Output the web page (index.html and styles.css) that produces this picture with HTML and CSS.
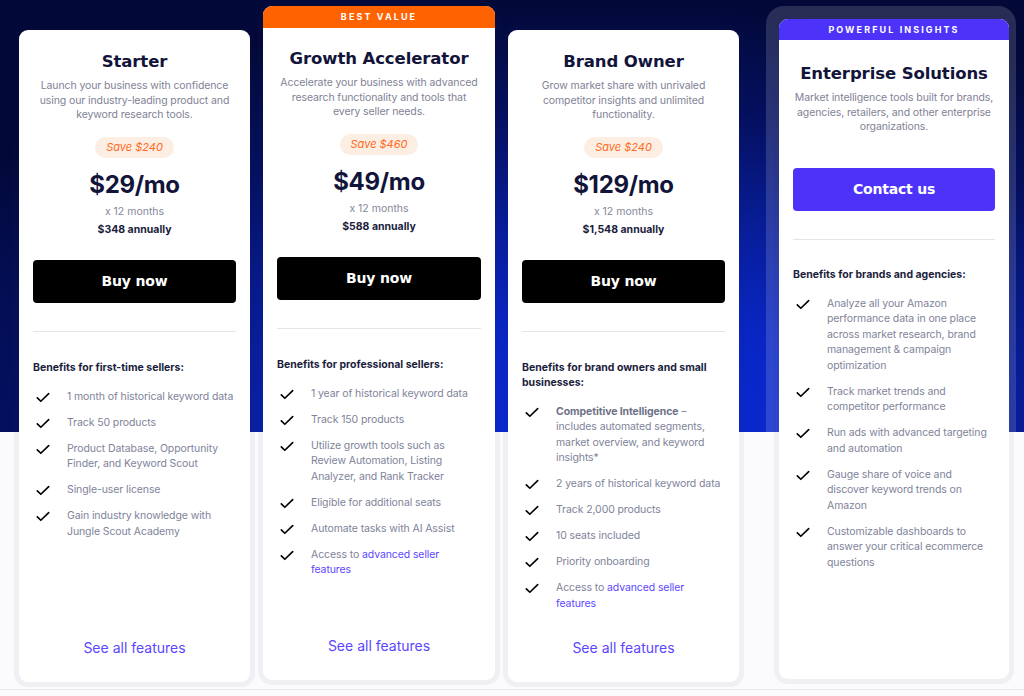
FILE: index.html
```html
<!DOCTYPE html>
<html lang="en">
<head>
<meta charset="utf-8">
<title>Pricing</title>
<link rel="stylesheet" href="styles.css">
</head>
<body>
<div class="page">
  <section class="plans">

    <article class="card card-starter">
      <div class="card-body">
        <h2 class="plan-title">Starter</h2>
        <p class="plan-desc">Launch your business with confidence<br>using our industry-leading product and<br>keyword research tools.</p>
        <span class="save">Save $240</span>
        <div class="price">$29/mo</div>
        <div class="months">x 12 months</div>
        <div class="annual">$348 annually</div>
        <a class="btn btn-black">Buy now</a>
        <hr class="divider">
        <h3 class="benefits-title">Benefits for first-time sellers:</h3>
        <ul class="benefits">
          <li><svg class="check" viewBox="0 0 16 12"><polyline points="1.5,6.5 5.5,10.3 14.5,1.5"/></svg><span>1 month of historical keyword data</span></li>
          <li><svg class="check" viewBox="0 0 16 12"><polyline points="1.5,6.5 5.5,10.3 14.5,1.5"/></svg><span>Track 50 products</span></li>
          <li><svg class="check" viewBox="0 0 16 12"><polyline points="1.5,6.5 5.5,10.3 14.5,1.5"/></svg><span>Product Database, Opportunity Finder, and Keyword Scout</span></li>
          <li><svg class="check" viewBox="0 0 16 12"><polyline points="1.5,6.5 5.5,10.3 14.5,1.5"/></svg><span>Single-user license</span></li>
          <li><svg class="check" viewBox="0 0 16 12"><polyline points="1.5,6.5 5.5,10.3 14.5,1.5"/></svg><span>Gain industry knowledge with Jungle Scout Academy</span></li>
        </ul>
        <a class="see-all">See all features</a>
      </div>
    </article>

    <article class="card card-growth">
      <div class="ribbon ribbon-orange">BEST VALUE</div>
      <div class="card-body">
        <h2 class="plan-title">Growth Accelerator</h2>
        <p class="plan-desc">Accelerate your business with advanced<br>research functionality and tools that<br>every seller needs.</p>
        <span class="save">Save $460</span>
        <div class="price">$49/mo</div>
        <div class="months">x 12 months</div>
        <div class="annual">$588 annually</div>
        <a class="btn btn-black">Buy now</a>
        <hr class="divider">
        <h3 class="benefits-title">Benefits for professional sellers:</h3>
        <ul class="benefits">
          <li><svg class="check" viewBox="0 0 16 12"><polyline points="1.5,6.5 5.5,10.3 14.5,1.5"/></svg><span>1 year of historical keyword data</span></li>
          <li><svg class="check" viewBox="0 0 16 12"><polyline points="1.5,6.5 5.5,10.3 14.5,1.5"/></svg><span>Track 150 products</span></li>
          <li><svg class="check" viewBox="0 0 16 12"><polyline points="1.5,6.5 5.5,10.3 14.5,1.5"/></svg><span>Utilize growth tools such as Review Automation, Listing Analyzer, and Rank Tracker</span></li>
          <li><svg class="check" viewBox="0 0 16 12"><polyline points="1.5,6.5 5.5,10.3 14.5,1.5"/></svg><span>Eligible for additional seats</span></li>
          <li><svg class="check" viewBox="0 0 16 12"><polyline points="1.5,6.5 5.5,10.3 14.5,1.5"/></svg><span>Automate tasks with AI Assist</span></li>
          <li><svg class="check" viewBox="0 0 16 12"><polyline points="1.5,6.5 5.5,10.3 14.5,1.5"/></svg><span>Access to <a class="inline-link">advanced seller features</a></span></li>
        </ul>
        <a class="see-all">See all features</a>
      </div>
    </article>

    <article class="card card-brand">
      <div class="card-body">
        <h2 class="plan-title">Brand Owner</h2>
        <p class="plan-desc">Grow market share with unrivaled<br>competitor insights and unlimited<br>functionality.</p>
        <span class="save">Save $240</span>
        <div class="price">$129/mo</div>
        <div class="months">x 12 months</div>
        <div class="annual">$1,548 annually</div>
        <a class="btn btn-black">Buy now</a>
        <hr class="divider">
        <h3 class="benefits-title">Benefits for brand owners and small businesses:</h3>
        <ul class="benefits">
          <li><svg class="check" viewBox="0 0 16 12"><polyline points="1.5,6.5 5.5,10.3 14.5,1.5"/></svg><span><b>Competitive Intelligence</b> – includes automated segments, market overview, and keyword insights*</span></li>
          <li><svg class="check" viewBox="0 0 16 12"><polyline points="1.5,6.5 5.5,10.3 14.5,1.5"/></svg><span>2 years of historical keyword data</span></li>
          <li><svg class="check" viewBox="0 0 16 12"><polyline points="1.5,6.5 5.5,10.3 14.5,1.5"/></svg><span>Track 2,000 products</span></li>
          <li><svg class="check" viewBox="0 0 16 12"><polyline points="1.5,6.5 5.5,10.3 14.5,1.5"/></svg><span>10 seats included</span></li>
          <li><svg class="check" viewBox="0 0 16 12"><polyline points="1.5,6.5 5.5,10.3 14.5,1.5"/></svg><span>Priority onboarding</span></li>
          <li><svg class="check" viewBox="0 0 16 12"><polyline points="1.5,6.5 5.5,10.3 14.5,1.5"/></svg><span>Access to <a class="inline-link">advanced seller features</a></span></li>
        </ul>
        <a class="see-all">See all features</a>
      </div>
    </article>

    <div class="enterprise-wrap">
      <article class="card card-enterprise">
        <div class="ribbon ribbon-purple">POWERFUL INSIGHTS</div>
        <div class="card-body">
          <h2 class="plan-title">Enterprise Solutions</h2>
          <p class="plan-desc">Market intelligence tools built for brands,<br>agencies, retailers, and other enterprise<br>organizations.</p>
          <a class="btn btn-purple">Contact us</a>
          <hr class="divider">
          <h3 class="benefits-title">Benefits for brands and agencies:</h3>
          <ul class="benefits">
            <li><svg class="check" viewBox="0 0 16 12"><polyline points="1.5,6.5 5.5,10.3 14.5,1.5"/></svg><span>Analyze all your Amazon performance data in one place across market research, brand management &amp; campaign optimization</span></li>
            <li><svg class="check" viewBox="0 0 16 12"><polyline points="1.5,6.5 5.5,10.3 14.5,1.5"/></svg><span>Track market trends and competitor performance</span></li>
            <li><svg class="check" viewBox="0 0 16 12"><polyline points="1.5,6.5 5.5,10.3 14.5,1.5"/></svg><span>Run ads with advanced targeting and automation</span></li>
            <li><svg class="check" viewBox="0 0 16 12"><polyline points="1.5,6.5 5.5,10.3 14.5,1.5"/></svg><span>Gauge share of voice and discover keyword trends on Amazon</span></li>
            <li><svg class="check" viewBox="0 0 16 12"><polyline points="1.5,6.5 5.5,10.3 14.5,1.5"/></svg><span>Customizable dashboards to answer your critical ecommerce questions</span></li>
          </ul>
        </div>
      </article>
    </div>

  </section>
</div>
</body>
</html>
```

FILE: styles.css
```css
* { box-sizing: border-box; }

body {
  margin: 0;
  font-family: Inter, "Noto Sans", "Liberation Sans", sans-serif;
  color: #11133a;
}

.page {
  width: 1024px;
  height: 696px;
  overflow: hidden;
  background:
    radial-gradient(ellipse 78% 100% at 60% 100%, #0a2ad8 0%, #0926c4 28%, #071c95 52%, #041061 74%, #020938 100%) top left / 100% 432px no-repeat,
    #fbfbfd;
}

.plans {
  display: flex;
  align-items: flex-start;
  gap: 13px;
  height: 690px;
  padding: 6px 0 0 19px;
  border-bottom: 1px solid #e6e6ee;
}

.card {
  display: flex;
  flex-direction: column;
  background: #fff;
  border-radius: 9px;
  box-shadow: 0 0 0 5px rgba(30, 40, 100, 0.055);
}

.card-starter, .card-brand {
  width: 231px;
  height: 652px;
  margin-top: 24px;
}

.card-growth {
  width: 232px;
  height: 674px;
}

.enterprise-wrap {
  width: 250px;
  height: 682px;
  margin-left: 14px;
  padding: 13px 7px 8px 13px;
  border-radius: 18px;
  background: rgba(255, 255, 255, 0.15);
}

.card-enterprise {
  width: 230px;
  height: 660px;
}

.ribbon {
  height: 22px;
  border-radius: 9px 9px 0 0;
  color: #fff;
  font-size: 9px;
  font-weight: 700;
  letter-spacing: 2.1px;
  line-height: 22px;
  text-align: center;
}

.ribbon-orange { background: #ff6200; }
.ribbon-purple { background: #4d33f9; height: 21px; line-height: 21px; }

.card-body {
  flex: 1;
  display: flex;
  flex-direction: column;
  align-items: center;
  text-align: center;
  padding: 21px 14px 24px;
}

.card-growth .card-body { padding-top: 20px; }
.card-enterprise .card-body { padding-top: 23px; }

.plan-title {
  margin: 0;
  font-family: "DejaVu Sans", sans-serif;
  font-weight: 700;
  font-size: 16.5px;
  line-height: 22px;
  color: #12143a;
  letter-spacing: -0.1px;
}

.plan-desc {
  margin: 6px 0 0;
  font-size: 10.5px;
  letter-spacing: -0.1px;
  line-height: 14.5px;
  color: #7f8296;
}

.save {
  margin-top: 14px;
  height: 21px;
  padding: 0 11px;
  border-radius: 11px;
  background: #fdeee3;
  color: #ff6b22;
  font-size: 11px;
  font-style: italic;
  line-height: 21px;
}

.price {
  margin-top: 13px;
  font-size: 24px;
  font-weight: 700;
  line-height: 28px;
  color: #12143a;
  letter-spacing: -0.3px;
}

.months {
  margin-top: 5px;
  font-size: 10.5px;
  line-height: 16px;
  color: #85889a;
}

.annual {
  margin-top: 2px;
  font-size: 10.5px;
  font-weight: 700;
  line-height: 16px;
  color: #1b1d3c;
}

.btn {
  align-self: stretch;
  display: flex;
  align-items: center;
  justify-content: center;
  height: 43px;
  margin-top: 22px;
  border-radius: 4px;
  color: #fff;
  font-family: "DejaVu Sans", sans-serif;
  font-weight: 700;
  font-size: 14px;
  letter-spacing: -0.2px;
}

.btn-black { background: #000; }

.btn-purple {
  background: #4d33f9;
  margin-top: 33px;
}

.divider {
  align-self: stretch;
  margin: 28px 0 0;
  border: 0;
  border-top: 1px solid #e4e5ea;
}

.benefits-title {
  align-self: stretch;
  margin: 28px 0 0;
  text-align: left;
  font-size: 10.5px;
  font-weight: 700;
  line-height: 15px;
  color: #1b1d3c;
}

.card-enterprise .benefits-title { margin-top: 27px; }

.benefits {
  align-self: stretch;
  display: flex;
  flex-direction: column;
  gap: 10.5px;
  margin: 14px 0 0;
  padding: 0;
  list-style: none;
  text-align: left;
}

.benefits li {
  display: grid;
  grid-template-columns: 34px 1fr;
  font-size: 10.5px;
  letter-spacing: -0.1px;
  line-height: 15.5px;
  color: #80839a;
}

.benefits b {
  font-weight: 700;
  color: #6f7286;
}

.check {
  width: 14px;
  height: 11px;
  margin: 3px 0 0 3px;
  fill: none;
  stroke: #000;
  stroke-width: 1.9;
  stroke-linecap: round;
  stroke-linejoin: round;
}

.inline-link { color: #5b47ff; }

.see-all {
  margin-top: auto;
  font-size: 14px;
  line-height: 20px;
  color: #5b46ff;
}
```
